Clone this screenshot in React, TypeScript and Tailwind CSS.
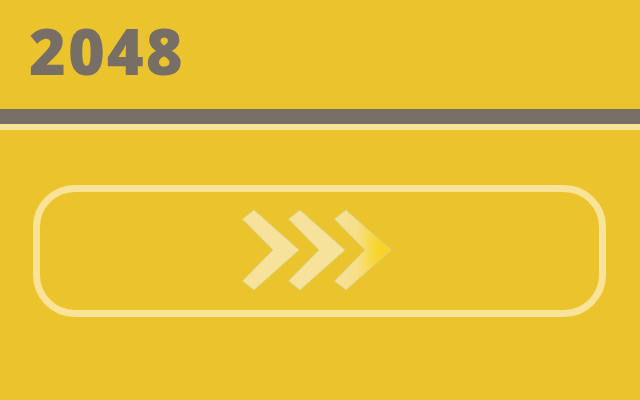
import React from "react";

const chevrons = [0, 46, 92];

function Arrows() {
  // chevron box starts at page (243, 209)
  return (
    <svg width="152" height="84" viewBox="0 0 152 84" className="block">
      <defs>
        <linearGradient id="fade" x1="0" y1="0" x2="1" y2="0">
          <stop offset="0%" stopColor="#f6e29b" />
          <stop offset="40%" stopColor="#f6df88" />
          <stop offset="75%" stopColor="#f8d52e" />
          <stop offset="100%" stopColor="#f9d21b" />
        </linearGradient>
      </defs>
      {chevrons.map((dx, i) => (
        <path
          key={i}
          transform={`translate(${dx} 0)`}
          d="M0.5 10 L12 1 L57 41 L12 81 L0.5 72 L31 41 Z"
          fill={i === 2 ? "url(#fade)" : "#f6e29b"}
          stroke="#d8d38e"
          strokeWidth="1"
          strokeLinejoin="round"
        />
      ))}
    </svg>
  );
}

export default function App() {
  return (
    <div className="w-[640px] h-[400px] bg-[#ebc42d] overflow-hidden">
      <div className="h-[109px] pl-[29px] pt-[19px]">
        <h1
          className="text-[63px] leading-none font-extrabold tracking-[2px] text-[#776e65]"
          style={{ fontFamily: '"Open Sans", "Liberation Sans", sans-serif' }}
        >
          2048
        </h1>
      </div>
      <div className="h-[15px] bg-[#786f66]" />
      <div className="h-[6px] bg-[#f8e398]" />
      <div className="pt-[55px] pl-[33px]">
        <div className="w-[573px] h-[132px] rounded-[42px] border-[7px] border-[#f8e398] flex items-center justify-center">
          <div className="ml-[-4px] mt-[-1px]">
            <Arrows />
          </div>
        </div>
      </div>
    </div>
  );
}
